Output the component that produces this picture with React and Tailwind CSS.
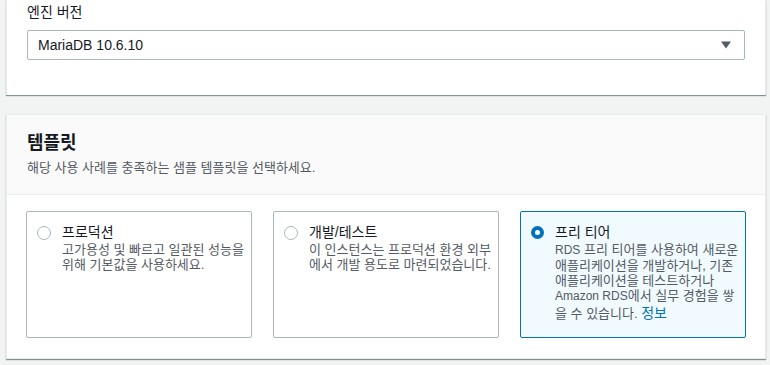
const FONT = { fontFamily: '"Liberation Sans", "Noto Sans CJK KR", sans-serif' }

const TEMPLATES = [
  {
    id: 'prod',
    title: '프로덕션',
    lines: [['고가용성 및 빠르고 일관된 성능을'], ['위해 기본값을 사용하세요.']],
  },
  {
    id: 'dev',
    title: '개발/테스트',
    lines: [['이 인스턴스는 프로덕션 환경 외부'], ['에서 개발 용도로 마련되었습니다.']],
  },
  {
    id: 'free',
    title: '프리 티어',
    lines: [
      ['', 'RDS', ' 프리 티어를 사용하여 새로운'],
      ['애플리케이션을 개발하거나, 기존'],
      ['애플리케이션을 테스트하거나'],
      ['', 'Amazon RDS', '에서 실무 경험을 쌓'],
    ],
    last: '을 수 있습니다. ',
    link: '정보',
    selected: true,
  },
]

function Radio({ checked }) {
  if (checked) {
    return <span className="mt-[3px] block h-[13px] w-[13px] shrink-0 rounded-full border-[4px] border-[#0073bb] bg-white" />
  }
  return <span className="mt-[3px] block h-[14px] w-[14px] shrink-0 rounded-full border-[1.5px] border-[#aab7b8] bg-white" />
}

function Line({ parts }) {
  return (
    <div className="whitespace-nowrap">
      {parts[0]}
      {parts[1] && <span className="text-[12px]">{parts[1]}</span>}
      {parts[2]}
    </div>
  )
}

function TemplateCard({ t }) {
  return (
    <div
      className={
        'flex h-[127px] gap-[11px] rounded-[2px] border px-[10px] pt-[10px] ' +
        (t.selected ? 'border-[#0073bb] bg-[#f1faff]' : 'border-[#aab7b8] bg-white')
      }
    >
      <div className="pt-[1px]">
        <Radio checked={t.selected} />
      </div>
      <div>
        <div className="text-[14px] leading-[20px] text-[#16191f]">{t.title}</div>
        <div className="text-[13px] leading-[15px] text-[#545b64]">
          {t.lines.map((l, i) => (
            <Line key={i} parts={l} />
          ))}
          {t.last && (
            <div className="mt-[2px] whitespace-nowrap">
              {t.last}
              <span className="text-[14px] text-[#0073bb]">{t.link}</span>
            </div>
          )}
        </div>
      </div>
    </div>
  )
}

export default function App() {
  return (
    <div className="min-h-[365px] w-[770px] overflow-hidden bg-[#f2f3f3]" style={FONT}>
      <div className="ml-[6px] w-[760px] border-x border-[#eaeded] bg-white px-[20px] pt-[2px] pb-[35px] shadow-[0_1px_1px_0_rgba(0,28,36,0.45)]">
        <div className="text-[14px] leading-[20px] text-[#16191f]">엔진 버전</div>
        <div className="mt-[8px] flex h-[30px] items-center justify-between rounded-[2px] border border-[#aab7b8] bg-white pl-[10px] pr-[13px]">
          <span className="text-[14px] text-[#16191f]">MariaDB 10.6.10</span>
          <svg width="10" height="8" viewBox="0 0 10 8">
            <path d="M0 0.5h10L5 7.5z" fill="#545b64" />
          </svg>
        </div>
      </div>

      <div className="mt-[19px] ml-[6px] w-[760px] border border-[#eaeded] bg-white shadow-[0_1px_1px_0_rgba(0,28,36,0.45)]">
        <div className="border-b border-[#eaeded] bg-[#fafafa] px-[20px] pt-[16px] pb-[18px]">
          <h2 className="text-[18px] font-bold leading-[24px] text-[#16191f]">템플릿</h2>
          <p className="mt-[5px] text-[13px] leading-[16px] text-[#545b64]">
            해당 사용 사례를 충족하는 샘플 템플릿을 선택하세요.
          </p>
        </div>
        <div className="grid grid-cols-3 gap-[21px] px-[19px] pt-[16px] pb-[20px]">
          {TEMPLATES.map((t) => (
            <TemplateCard key={t.id} t={t} />
          ))}
        </div>
      </div>
    </div>
  )
}
